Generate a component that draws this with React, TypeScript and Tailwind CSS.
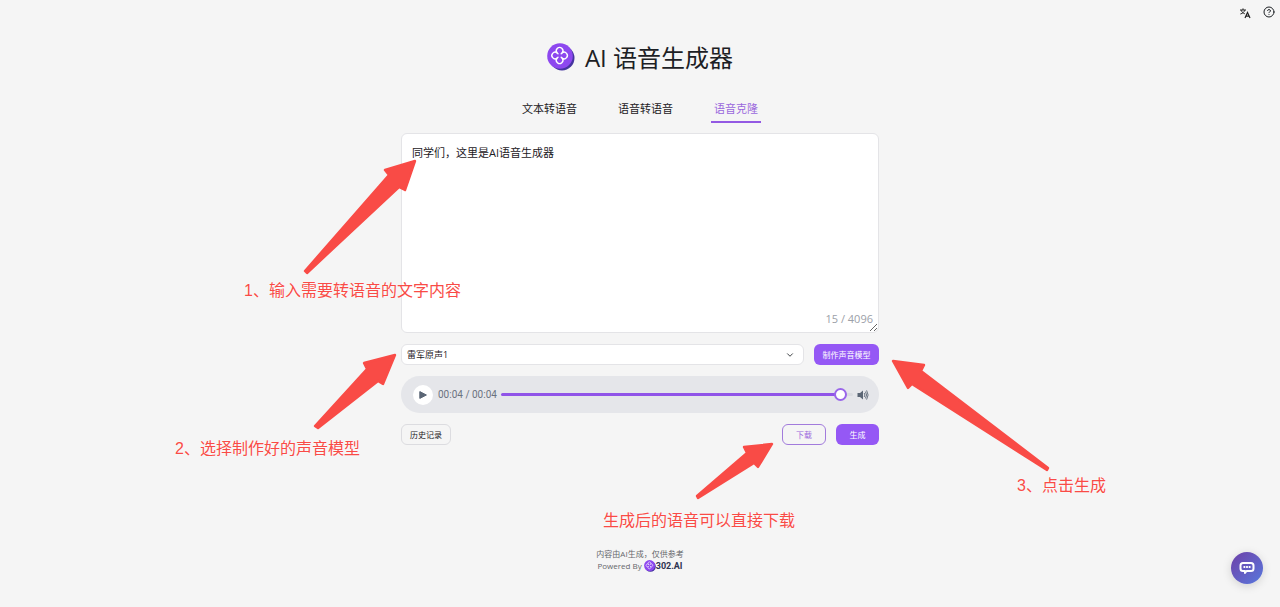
import { useState } from "react";
import { ChevronDown, CircleHelp } from "lucide-react";

const TABS = ["文本转语音", "语音转语音", "语音克隆"];
const MAX_LENGTH = 4096;

// Tail, shaft and head of every hint arrow
const ARROWS = [
  "M305 271 L389 175 L385 170 L415 161 L405 190 L399 187 L307 273 Z",
  "M315 426 L367 369 L364 363 L395 355 L383 384 L378 381 L318 428 Z",
  "M893 361 L924 365 L921 371 L1048 468 L1047 470 L912 384 L908 388 Z",
  "M772 444 L744 447 L747 453 L697 496 L698 498 L754 463 L758 467 Z",
];

const HINTS = [
  { text: "1、输入需要转语音的文字内容", place: "-left-[157px] top-[146px]" },
  { text: "2、选择制作好的声音模型", place: "-left-[226px] top-[304px]" },
  { text: "3、点击生成", place: "left-[616px] top-[341px]" },
  { text: "生成后的语音可以直接下载", place: "left-[202px] top-[376px]" },
];

function Logo({ className }: { className: string }) {
  return (
    <svg viewBox="0 0 28 28" className={className} aria-hidden="true">
      <circle cx="15" cy="15" r="12.5" fill="#45349f" />
      <circle cx="13" cy="13" r="12.8" fill="#8d47ef" />
      <g fill="none" stroke="#fff" strokeWidth="1.4" strokeLinecap="round" strokeLinejoin="round">
        <path d="M9.9 9.7 A3.3 3.3 0 1 1 15.3 9.7 A3.3 3.3 0 1 1 15.3 15.3 A3.3 3.3 0 1 1 9.9 15.3 A3.3 3.3 0 1 1 9.9 9.7 Z" />
        <path d="M9.9 9.7 L11 10.8 M15.3 9.7 L14.2 10.8 M15.3 15.3 L14.2 14.2 M9.9 15.3 L11 14.2" />
      </g>
    </svg>
  );
}

function TranslateIcon() {
  return (
    <svg viewBox="0 0 12 12" className="h-3 w-3" fill="none" stroke="#222" aria-hidden="true">
      <path d="M1 3 H7 M4 1.4 V3 M2.2 3.2 C2.8 5 4 6.2 5.8 6.8 M5.8 3.2 C5.2 5 3.6 6.4 1.4 7" />
      <path d="M6 11 L8.5 5.4 L11 11 M6.9 9.2 H10.1" strokeWidth="1.2" />
    </svg>
  );
}

function SpeakerIcon() {
  return (
    <svg viewBox="0 0 12 12" className="h-3 w-3 shrink-0" fill="none" stroke="#5b6675" aria-hidden="true">
      <path d="M0.5 4 H3 L6 1.5 V10.5 L3 8 H0.5 Z" fill="#5b6675" stroke="none" />
      <path d="M7.2 4 Q8.6 6 7.2 8 M8.4 2.6 Q10.8 6 8.4 9.4 M9.6 1.4 Q12.6 6 9.6 10.6" strokeWidth="0.9" />
    </svg>
  );
}

function AudioPlayer() {
  return (
    <div className="flex h-[37px] items-center rounded-full bg-[#e5e6ea] pr-2.5 pl-3">
      <button aria-label="播放" className="flex h-5 w-5 shrink-0 items-center justify-center rounded-full bg-white">
        <svg viewBox="0 0 8 8" className="h-2 w-2" aria-hidden="true">
          <path d="M0.8 0.6 L7.4 4 L0.8 7.4 Z" fill="#5b6675" stroke="#5b6675" strokeLinejoin="round" />
        </svg>
      </button>
      <span className="ml-[5px] shrink-0 font-[Roboto] text-[10px] text-[#6b7280]">00:04 / 00:04</span>
      <input
        type="range"
        aria-label="播放进度"
        max={400}
        defaultValue={393}
        className="mx-1 h-[14px] min-w-0 flex-1 appearance-none bg-transparent [&::-webkit-slider-runnable-track]:h-[3px] [&::-webkit-slider-runnable-track]:rounded-full [&::-webkit-slider-runnable-track]:bg-[linear-gradient(to_right,#9054e8_97%,#d9dbe0_97%)] [&::-webkit-slider-thumb]:-mt-[5px] [&::-webkit-slider-thumb]:h-[13px] [&::-webkit-slider-thumb]:w-[13px] [&::-webkit-slider-thumb]:appearance-none [&::-webkit-slider-thumb]:rounded-full [&::-webkit-slider-thumb]:border-2 [&::-webkit-slider-thumb]:border-[#9a66ea] [&::-webkit-slider-thumb]:bg-white"
      />
      <button aria-label="音量">
        <SpeakerIcon />
      </button>
    </div>
  );
}

function Annotations() {
  return (
    <div className="pointer-events-none absolute inset-0">
      <svg viewBox="401 133 478 312" className="absolute top-0 left-0 h-[312px] w-[478px] overflow-visible" aria-hidden="true">
        {ARROWS.map((d) => (
          <path key={d} d={d} fill="#f94b46" stroke="#f94b46" strokeWidth="2.4" strokeLinejoin="round" />
        ))}
      </svg>
      {HINTS.map((hint) => (
        <p
          key={hint.text}
          className={`absolute text-base leading-6 whitespace-nowrap text-[#f94b46] [text-shadow:0_0_2px_#fff] font-['Liberation_Sans','Noto_Sans_CJK_SC',sans-serif] ${hint.place}`}
        >
          {hint.text}
        </p>
      ))}
    </div>
  );
}

export default function App() {
  const [activeTab, setActiveTab] = useState("语音克隆");
  const [text, setText] = useState("同学们，这里是AI语音生成器\n");

  return (
    <div className="relative min-h-screen overflow-hidden bg-[#f5f5f5] font-['Open_Sans','Noto_Sans_CJK_SC',sans-serif] text-[#1c2024]">
      <div className="absolute top-[5px] right-[5px] flex gap-3">
        <button aria-label="切换语言" className="pt-0.5">
          <TranslateIcon />
        </button>
        <button aria-label="帮助">
          <CircleHelp className="h-3 w-3" />
        </button>
      </div>

      <header className="flex items-center justify-center gap-2.5 pt-[38px]">
        <Logo className="h-7 w-7" />
        <h1 className="pt-0.5 text-2xl leading-9">AI 语音生成器</h1>
      </header>

      <nav className="mt-[21px] flex justify-center gap-[35px]" role="tablist">
        {TABS.map((tab) => (
          <button
            key={tab}
            role="tab"
            aria-selected={tab === activeTab}
            onClick={() => setActiveTab(tab)}
            className={`border-b-2 px-[3px] text-[11px] leading-6 ${tab === activeTab ? "border-[#9359e3] text-[#9a68dd]" : "border-transparent"}`}
          >
            {tab}
          </button>
        ))}
      </nav>

      <main className="relative mx-auto mt-2.5 flex w-full max-w-[478px] flex-col gap-[11px]">
        <div className="relative">
          <textarea
            aria-label="文本内容"
            value={text}
            maxLength={MAX_LENGTH}
            onChange={(e) => setText(e.target.value)}
            className="block h-[200px] w-full resize-y rounded-md border border-[#e4e4e7] bg-white px-2.5 py-2.5 text-[11px] leading-[18px]"
          />
          <span className="absolute right-1.5 bottom-1.5 text-[11px] leading-4 text-[#9ca0a8]">
            {text.length} / {MAX_LENGTH}
          </span>
        </div>

        <div className="flex gap-2.5">
          <div className="relative flex-1">
            <select aria-label="声音模型" className="block h-[21px] w-full appearance-none rounded-md border border-[#e4e4e7] bg-white px-[5px] text-[9px]">
              <option>雷军原声1</option>
            </select>
            <ChevronDown className="pointer-events-none absolute top-[6px] right-[9px] h-2.5 w-2.5" />
          </div>
          <button className="h-[21px] w-[65px] rounded-md bg-[#9558f5] text-[8px] text-white">
            制作声音模型
          </button>
        </div>

        <AudioPlayer />

        <div className="flex gap-2.5">
          <button className="mr-auto h-[21px] w-[50px] rounded-md border border-[#dcdce0] text-[8px]">历史记录</button>
          <button className="h-[21px] w-11 rounded-md border border-[#a27bdc] text-[8px] text-[#9a68dd]">下载</button>
          <button className="h-[21px] w-[43px] rounded-md bg-[#9558f5] text-[8px] text-white">生成</button>
        </div>

        <Annotations />
      </main>

      <footer className="mt-[103px] text-center text-[8px] leading-3 text-[#65676b]">
        <p>内容由AI生成，仅供参考</p>
        <p className="flex items-center justify-center gap-0.5">
          Powered By
          <a href="#" className="flex items-center font-[Roboto] text-[9px] font-bold text-[#2f3350]">
            <Logo className="h-3 w-3" />
            302.AI
          </a>
        </p>
      </footer>

      <button
        aria-label="在线客服"
        className="absolute right-[17px] bottom-[23px] flex h-8 w-8 items-center justify-center rounded-full bg-linear-to-br from-[#6b3fa8] to-[#5578dd] shadow-[0_2px_10px_rgba(0,0,0,0.15)]"
      >
        <svg viewBox="0 0 16 14" className="h-3.5 w-4" aria-hidden="true">
          <path d="M4 2 H12 Q14.5 2 14.5 4.5 V7.5 Q14.5 10 12 10 H7.5 L6 12 V10 H4 Q1.5 10 1.5 7.5 V4.5 Q1.5 2 4 2 Z" fill="none" stroke="#fff" strokeWidth="2" strokeLinejoin="round" />
          <path d="M4.5 5 H6.3 V7 H4.5 Z M7.1 5 H8.9 V7 H7.1 Z M9.7 5 H11.5 V7 H9.7 Z" fill="#fff" />
        </svg>
      </button>
    </div>
  );
}
